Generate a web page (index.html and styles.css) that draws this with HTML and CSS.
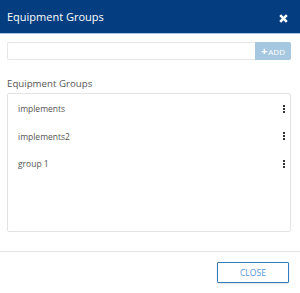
FILE: index.html
```html
<!DOCTYPE html>
<html lang="en">
<head>
    <meta charset="UTF-8">
    <meta name="viewport" content="width=device-width, initial-scale=1.0">
    <title>Equipment Groups</title>
    <link rel="stylesheet" href="styles.css">
</head>
<body>
    <div class="modal">
        <div class="modal-header">
            <h2 class="modal-title">Equipment Groups</h2>
            <button class="close-x" aria-label="Close">
                <svg width="9" height="9" viewBox="0 0 9 9">
                    <path d="M1.2 1.2 L7.8 7.8 M7.8 1.2 L1.2 7.8" stroke="#fff" stroke-width="2.6" stroke-linecap="butt"/>
                </svg>
            </button>
        </div>

        <div class="modal-body">
            <div class="add-row">
                <input class="add-input" type="text">
                <button class="add-btn"><span class="plus">+</span>ADD</button>
            </div>

            <div class="list-label">Equipment Groups</div>

            <ul class="group-list">
                <li class="group-item">
                    <span>implements</span>
                    <span class="dots"><i></i><i></i><i></i></span>
                </li>
                <li class="group-item">
                    <span>implements2</span>
                    <span class="dots"><i></i><i></i><i></i></span>
                </li>
                <li class="group-item">
                    <span>group 1</span>
                    <span class="dots"><i></i><i></i><i></i></span>
                </li>
            </ul>
        </div>

        <div class="modal-footer">
            <button class="close-btn">CLOSE</button>
        </div>
    </div>
</body>
</html>
```

FILE: styles.css
```css
body {
    margin: 0;
    padding: 0;
    background-color: #fff;
    font-family: "Open Sans", "Liberation Sans", sans-serif;
    color: #555;
}

.modal {
    width: 300px;
    height: 293px;
    display: flex;
    flex-direction: column;
}

.modal-header {
    height: 33px;
    background-color: #053e80;
    border-bottom: 1px solid #a9c6e4;
    display: flex;
    align-items: center;
    justify-content: space-between;
    padding: 0 12px 0 7px;
    box-sizing: content-box;
}

.modal-title {
    margin: 0;
    font-size: 11px;
    font-weight: 400;
    color: #fff;
    line-height: 1;
    padding-bottom: 1px;
}

.close-x {
    background: none;
    border: 0;
    padding: 0;
    margin-top: 4px;
    width: 9px;
    height: 9px;
    display: flex;
    cursor: pointer;
}

.modal-body {
    padding: 8px 9px 0 7px;
    height: 209px;
    border-bottom: 1px solid #e5e5e5;
}

.add-row {
    display: flex;
    height: 18px;
}

.add-input {
    flex: 1;
    margin: 0;
    border: 1px solid #e6e6e6;
    border-right: 0;
    border-radius: 2px 0 0 2px;
    padding: 0 6px;
    box-sizing: border-box;
    height: 18px;
    outline: none;
}

.add-btn {
    width: 36px;
    height: 18px;
    margin: 0;
    padding: 0;
    border: 0;
    border-radius: 0 2px 2px 0;
    background-color: #a6c7e0;
    color: #fff;
    font-family: "Open Sans", "Liberation Sans", sans-serif;
    font-size: 8px;
    display: flex;
    align-items: center;
    justify-content: center;
    cursor: pointer;
}

.plus {
    font-size: 11px;
    font-weight: 700;
    line-height: 1;
    margin-right: 1px;
    margin-top: -1px;
}

.list-label {
    font-size: 9.7px;
    color: #555;
    margin-top: 17px;
    line-height: 13px;
}

.group-list {
    list-style: none;
    margin: 3px 0 0;
    padding: 1px 0 0;
    height: 139px;
    box-sizing: border-box;
    border: 1px solid #e3e3e3;
    border-radius: 2px;
}

.group-item {
    height: 27.5px;
    display: flex;
    align-items: center;
    justify-content: space-between;
    padding: 0 5px 0 10px;
    font-size: 8.5px;
    color: #555;
}

.dots {
    display: flex;
    flex-direction: column;
    gap: 1px;
}

.dots i {
    display: block;
    width: 2px;
    height: 2px;
    background-color: #333;
}

.modal-footer {
    flex: 1;
    display: flex;
    justify-content: flex-end;
    align-items: flex-start;
    padding: 10px 11px 0 0;
}

.close-btn {
    appearance: none;
    box-sizing: border-box;
    width: 72px;
    height: 21px;
    background: #fff;
    border: 1.5px solid #2f7bbd;
    border-radius: 1px;
    color: #4f94cf;
    font-family: "Open Sans", "Liberation Sans", sans-serif;
    font-size: 8.6px;
    padding: 0;
    cursor: pointer;
    box-shadow: 0 1px 2px rgba(0, 0, 0, 0.12);
}
```
